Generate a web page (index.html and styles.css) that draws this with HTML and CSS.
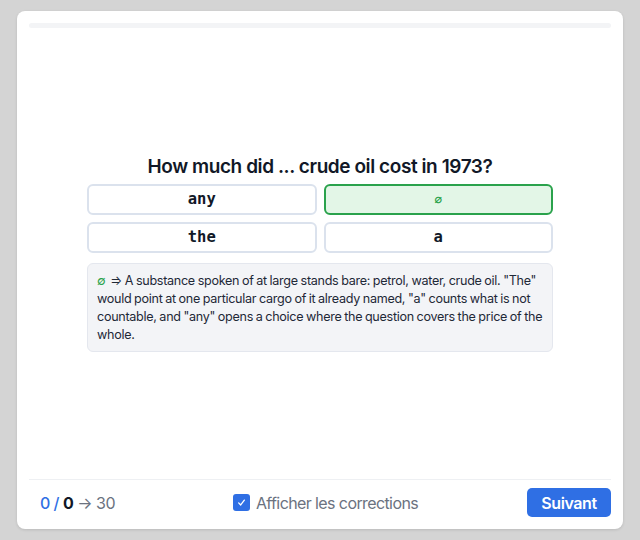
FILE: index.html
```html
<!DOCTYPE html>
<html lang="en">
<head>
  <meta charset="UTF-8">
  <meta name="viewport" content="width=device-width, initial-scale=1.0">
  <title>Quiz - Articles</title>
  <link rel="stylesheet" href="styles.css">
</head>
<body>
  <div class="quiz-card">
    <div class="progress"><div class="progress-fill"></div></div>

    <main class="quiz-body">
      <div class="question">
        <h1>How much did ... crude oil cost in 1973?</h1>

        <div class="choices">
          <button class="choice">any</button>
          <button class="choice correct">∅</button>
          <button class="choice">the</button>
          <button class="choice">a</button>
        </div>

        <div class="explanation">
          <span class="mark">∅</span>⇒ A substance spoken of at large stands bare: petrol, water, crude oil. "The" would point at one particular cargo of it already named, "a" counts what is not countable, and "any" opens a choice where the question covers the price of the whole.
        </div>
      </div>
    </main>

    <footer class="quiz-footer">
      <div class="score">
        <span class="score-good">0 /</span> <strong>0</strong> <span class="score-total">→ 30</span>
      </div>

      <label class="toggle">
        <span class="checkbox">
          <svg viewBox="0 0 16 16" fill="none" stroke="currentColor" stroke-width="1.6" stroke-linecap="round" stroke-linejoin="round">
            <polyline points="4.5 8.5 7 11 11.5 5"></polyline>
          </svg>
        </span>
        Afficher les corrections
      </label>

      <button class="next">Suivant</button>
    </footer>
  </div>
</body>
</html>
```

FILE: styles.css
```css
*, *::before, *::after {
  margin: 0;
  padding: 0;
  box-sizing: border-box;
}

body {
  font-family: Inter, 'Noto Sans', sans-serif;
  background-color: #d4d4d4;
  color: #111827;
  padding: 11px 17px;
}

.quiz-card {
  width: 606px;
  height: 518px;
  background-color: white;
  border-radius: 8px;
  box-shadow: 0 1px 3px rgba(0, 0, 0, 0.12);
  padding: 12px 12px 12px;
  display: flex;
  flex-direction: column;
}

.progress {
  height: 5px;
  background-color: #f3f4f6;
  border-radius: 3px;
}

.progress-fill {
  width: 0;
  height: 100%;
}

.quiz-body {
  flex: 1;
  display: flex;
  align-items: center;
  justify-content: center;
}

.question {
  width: 466px;
  margin-bottom: 2px;
}

h1 {
  font-size: 19px;
  font-weight: 600;
  letter-spacing: -0.42px;
  text-align: center;
  color: #111827;
  line-height: 26px;
  margin-bottom: 4px;
}

.choices {
  display: grid;
  grid-template-columns: 1fr 1fr;
  gap: 7px 7px;
}

.choice {
  height: 31px;
  background: white;
  border: 2px solid #dbe2ed;
  border-radius: 6px;
  font-family: 'DejaVu Sans Mono', monospace;
  font-weight: bold;
  font-size: 15.5px;
  color: #111827;
}

.choice.correct {
  background-color: #e3f6e7;
  border-color: #2aa24c;
  color: #2aa24c;
  font-size: 13px;
}

.explanation {
  margin-top: 10px;
  background-color: #f3f4f7;
  border: 1px solid #e4e7ee;
  border-radius: 6px;
  padding: 8px 7px 7px 9px;
  font-size: 12.6px;
  letter-spacing: -0.3px;
  word-spacing: -0.5px;
  line-height: 18px;
  color: #1f2937;
}

.mark {
  display: inline-block;
  color: #2aa24c;
  margin-right: 5px;
}

.quiz-footer {
  border-top: 1px solid #eef0f3;
  padding: 8px 0 0 11px;
  display: grid;
  grid-template-columns: 1fr auto 1fr;
  align-items: center;
}

.score {
  font-size: 16px;
  letter-spacing: -0.5px;
  color: #6b7280;
}

.score-good {
  color: #2f6fe4;
  font-weight: 500;
}

.score strong {
  color: #111827;
  font-weight: 700;
}

.toggle {
  display: flex;
  align-items: center;
  gap: 6px;
  font-size: 16px;
  letter-spacing: -0.6px;
  color: #6b7280;
}

.checkbox {
  width: 17px;
  height: 17px;
  border-radius: 3px;
  background-color: #2f6fe4;
  color: white;
  display: flex;
  align-items: center;
  justify-content: center;
}

.checkbox svg {
  width: 13px;
  height: 13px;
}

.next {
  justify-self: end;
  width: 84px;
  height: 29px;
  background-color: #2f6fe4;
  color: white;
  border: none;
  border-radius: 5px;
  font-family: Inter, sans-serif;
  font-size: 16px;
  font-weight: 600;
  letter-spacing: -0.4px;
}
```
